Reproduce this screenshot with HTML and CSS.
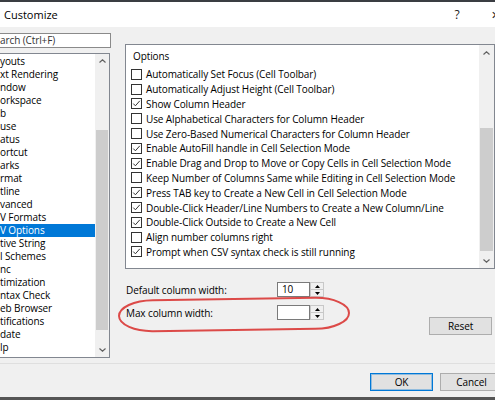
FILE: index.html
```html
<!DOCTYPE html>
<html>
<head>
<meta charset="utf-8">
<link rel="stylesheet" href="styles.css">
</head>
<body>
<div class="topstrip"></div>
<div class="titlebar">
  <span class="title">Customize</span>
  <span class="tb-btn help">?</span>
  <span class="tb-btn close">✕</span>
</div>
<div class="main">
  <div class="leftcol">
    <div class="search">arch (Ctrl+F)</div>
    <div class="listbox">
      <ul class="items">
        <li>youts</li>
        <li>xt Rendering</li>
        <li>ndow</li>
        <li>orkspace</li>
        <li>b</li>
        <li>use</li>
        <li>atus</li>
        <li>ortcut</li>
        <li>arks</li>
        <li>rmat</li>
        <li>tline</li>
        <li>vanced</li>
        <li>V Formats</li>
        <li class="sel">V Options</li>
        <li>tive String</li>
        <li>l Schemes</li>
        <li>nc</li>
        <li>timization</li>
        <li>ntax Check</li>
        <li>eb Browser</li>
        <li>tifications</li>
        <li>date</li>
        <li>lp</li>
      </ul>
      <div class="sb sb-left">
        <div class="sb-btn"><svg width="7" height="4" viewBox="0 0 7 4"><polyline points="0.5,3.5 3.5,0.8 6.5,3.5" fill="none" stroke="#606060" stroke-width="1.2"/></svg></div>
        <div class="sb-track t-left"><div class="sb-thumb"></div></div>
        <div class="sb-btn"><svg width="7" height="4" viewBox="0 0 7 4"><polyline points="0.5,0.5 3.5,3.2 6.5,0.5" fill="none" stroke="#606060" stroke-width="1.2"/></svg></div>
      </div>
    </div>
  </div>
  <div class="rightcol">
    <div class="optbox">
      <div class="optlist">
        <div class="opthead">Options</div>
        <div class="row"><span class="cb"></span>Automatically Set Focus (Cell Toolbar)</div>
        <div class="row"><span class="cb"></span>Automatically Adjust Height (Cell Toolbar)</div>
        <div class="row"><span class="cb on"><svg width="9" height="9" viewBox="0 0 9 9"><polyline points="1.3,4.6 3.4,6.8 7.8,1.8" fill="none" stroke="#333" stroke-width="1"/></svg></span>Show Column Header</div>
        <div class="row"><span class="cb"></span>Use Alphabetical Characters for Column Header</div>
        <div class="row"><span class="cb"></span>Use Zero-Based Numerical Characters for Column Header</div>
        <div class="row"><span class="cb on"><svg width="9" height="9" viewBox="0 0 9 9"><polyline points="1.3,4.6 3.4,6.8 7.8,1.8" fill="none" stroke="#333" stroke-width="1"/></svg></span>Enable AutoFill handle in Cell Selection Mode</div>
        <div class="row"><span class="cb on"><svg width="9" height="9" viewBox="0 0 9 9"><polyline points="1.3,4.6 3.4,6.8 7.8,1.8" fill="none" stroke="#333" stroke-width="1"/></svg></span>Enable Drag and Drop to Move or Copy Cells in Cell Selection Mode</div>
        <div class="row"><span class="cb"></span>Keep Number of Columns Same while Editing in Cell Selection Mode</div>
        <div class="row"><span class="cb on"><svg width="9" height="9" viewBox="0 0 9 9"><polyline points="1.3,4.6 3.4,6.8 7.8,1.8" fill="none" stroke="#333" stroke-width="1"/></svg></span>Press TAB key to Create a New Cell in Cell Selection Mode</div>
        <div class="row"><span class="cb on"><svg width="9" height="9" viewBox="0 0 9 9"><polyline points="1.3,4.6 3.4,6.8 7.8,1.8" fill="none" stroke="#333" stroke-width="1"/></svg></span>Double-Click Header/Line Numbers to Create a New Column/Line</div>
        <div class="row"><span class="cb on"><svg width="9" height="9" viewBox="0 0 9 9"><polyline points="1.3,4.6 3.4,6.8 7.8,1.8" fill="none" stroke="#333" stroke-width="1"/></svg></span>Double-Click Outside to Create a New Cell</div>
        <div class="row"><span class="cb"></span>Align number columns right</div>
        <div class="row"><span class="cb on"><svg width="9" height="9" viewBox="0 0 9 9"><polyline points="1.3,4.6 3.4,6.8 7.8,1.8" fill="none" stroke="#333" stroke-width="1"/></svg></span>Prompt when CSV syntax check is still running</div>
      </div>
      <div class="sb sb-right">
        <div class="sb-btn"><svg width="7" height="4" viewBox="0 0 7 4"><polyline points="0.5,3.5 3.5,0.8 6.5,3.5" fill="none" stroke="#606060" stroke-width="1.2"/></svg></div>
        <div class="sb-track t-right"><div class="sb-thumb"></div></div>
        <div class="sb-btn"><svg width="7" height="4" viewBox="0 0 7 4"><polyline points="0.5,0.5 3.5,3.2 6.5,0.5" fill="none" stroke="#606060" stroke-width="1.2"/></svg></div>
      </div>
    </div>
    <div class="fields">
      <div class="spinrows">
        <div class="frow">
          <span class="flabel">Default column width:</span>
          <span class="spin"><span class="sinput">10</span><span class="sbtns"><span class="sbt"><svg width="5" height="3" viewBox="0 0 5 3"><polygon points="0,3 2.5,0 5,3" fill="#000"/></svg></span><span class="sbt"><svg width="5" height="3" viewBox="0 0 5 3"><polygon points="0,0 2.5,3 5,0" fill="#000"/></svg></span></span></span>
        </div>
        <div class="frow">
          <span class="flabel">Max column width:</span>
          <span class="spin"><span class="sinput"></span><span class="sbtns"><span class="sbt"><svg width="5" height="3" viewBox="0 0 5 3"><polygon points="0,3 2.5,0 5,3" fill="#000"/></svg></span><span class="sbt"><svg width="5" height="3" viewBox="0 0 5 3"><polygon points="0,0 2.5,3 5,0" fill="#000"/></svg></span></span></span>
        </div>
      </div>
      <span class="btn reset">Reset</span>
    </div>
  </div>
</div>
<div class="separator"></div>
<div class="footer">
  <span class="btn ok">OK</span>
  <span class="btn cancel">Cancel</span>
</div>
<div class="bottomstrip"></div>
<svg class="annot" width="240" height="40" viewBox="0 0 240 40">
  <rect x="3" y="3" width="230" height="31" rx="34" ry="16" fill="none" stroke="#dc4a48" stroke-width="2" transform="rotate(-0.8 118 18)"/>
</svg>
</body>
</html>
```

FILE: styles.css
```css
html, body {
  margin: 0;
  padding: 0;
}
body {
  width: 495px;
  height: 400px;
  overflow: hidden;
  position: relative;
  background: #f0f0f0;
  font-family: "Open Sans", "Noto Sans", sans-serif;
  font-size: 10px;
  letter-spacing: -0.1px;
  color: #000;
}
.topstrip {
  height: 2px;
  background: #3a3d42;
}
.titlebar {
  width: 518px;
  height: 25px;
  background: #fff;
  display: flex;
  align-items: center;
}
.title {
  flex: 1;
  padding-left: 4px;
  font-size: 11px;
  letter-spacing: 0;
  color: #000;
}
.tb-btn {
  display: flex;
  justify-content: center;
  align-items: center;
  height: 25px;
  font-size: 12px;
  color: #222;
}
.help {
  width: 30px;
}
.close {
  width: 46px;
  font-size: 11px;
}
.main {
  display: flex;
  height: 336px;
}
.leftcol {
  width: 110px;
  flex: none;
}
.search {
  margin: 6px 0 0 -2px;
  width: 110px;
  height: 13px;
  border: 1px solid #8a8a8a;
  background: #fff;
  padding-left: 1px;
  line-height: 13px;
  color: #333;
  white-space: nowrap;
  overflow: hidden;
}
.listbox {
  margin: 5px 0 0 -2px;
  width: 110px;
  height: 303px;
  border: 1px solid #828790;
  background: #fff;
  display: flex;
}
.items {
  list-style: none;
  margin: 0;
  padding: 1px 0 0 0;
  flex: 1;
}
.items li {
  height: 13px;
  line-height: 13px;
  padding-left: 1px;
  white-space: nowrap;
  overflow: hidden;
}
.items li.sel {
  background: #0078d7;
  color: #fff;
}
.sb {
  display: flex;
  flex-direction: column;
  background: #f0f0f0;
  flex: none;
}
.sb-left {
  width: 14px;
}
.sb-right {
  width: 15px;
}
.sb-btn {
  height: 14px;
  display: flex;
  justify-content: center;
  align-items: center;
}
.sb-right .sb-btn {
  height: 15px;
}
.sb-track {
  flex: 1;
  display: flex;
  flex-direction: column;
}
.t-left {
  padding: 62px 1px 13px 1px;
}
.t-right {
  padding: 68px 1px 2px 1px;
}
.sb-thumb {
  flex: 1;
  background: #cdcdcd;
}
.rightcol {
  margin-left: 15px;
  width: 370px;
  flex: none;
}
.optbox {
  margin-top: 17px;
  height: 223px;
  border: 1px solid #828790;
  background: #fff;
  display: flex;
}
.optlist {
  flex: 1;
  padding-top: 4px;
}
.opthead {
  height: 15px;
  line-height: 15px;
  padding-left: 7px;
  margin-bottom: 3px;
}
.row {
  height: 14.8px;
  display: flex;
  align-items: center;
  white-space: nowrap;
}
.cb {
  width: 9px;
  height: 9px;
  border: 1px solid #333;
  background: #fff;
  margin-left: 5px;
  margin-right: 4px;
  display: flex;
  justify-content: center;
  align-items: center;
  flex: none;
}
.fields {
  display: flex;
  margin-top: 13px;
}
.spinrows {
  display: flex;
  flex-direction: column;
  gap: 8px;
}
.frow {
  display: flex;
  align-items: center;
  height: 15px;
}
.flabel {
  width: 151px;
  padding-left: 1px;
}
.spin {
  display: flex;
  height: 15px;
}
.sinput {
  width: 27px;
  height: 13px;
  border: 1px solid #7a7a7a;
  background: #fff;
  padding-left: 4px;
  line-height: 13px;
}
.sbtns {
  display: flex;
  flex-direction: column;
  width: 14px;
  height: 15px;
}
.sbt {
  flex: 1;
  border: 1px solid #c8c8c8;
  background: #f0f0f0;
  display: flex;
  justify-content: center;
  align-items: center;
}
.sbt + .sbt {
  border-top: none;
}
.btn {
  display: flex;
  justify-content: center;
  align-items: center;
  height: 16px;
  width: 61px;
  border: 1px solid #adadad;
  background: #e1e1e1;
  flex: none;
}
.reset {
  margin-left: auto;
  margin-right: 3px;
  margin-top: 35px;
}
.separator {
  height: 1px;
  background: #dfdfdf;
}
.footer {
  height: 33px;
  display: flex;
  align-items: flex-start;
  padding-top: 9px;
  padding-left: 370px;
  gap: 7px;
  box-sizing: border-box;
  width: 520px;
}
.ok {
  border-color: #0078d7;
  box-shadow: inset 0 0 0 1px rgba(0, 120, 215, 0.35);
}
.bottomstrip {
  height: 3px;
  background: #555;
}
.annot {
  position: absolute;
  left: 116px;
  top: 296px;
}
```
